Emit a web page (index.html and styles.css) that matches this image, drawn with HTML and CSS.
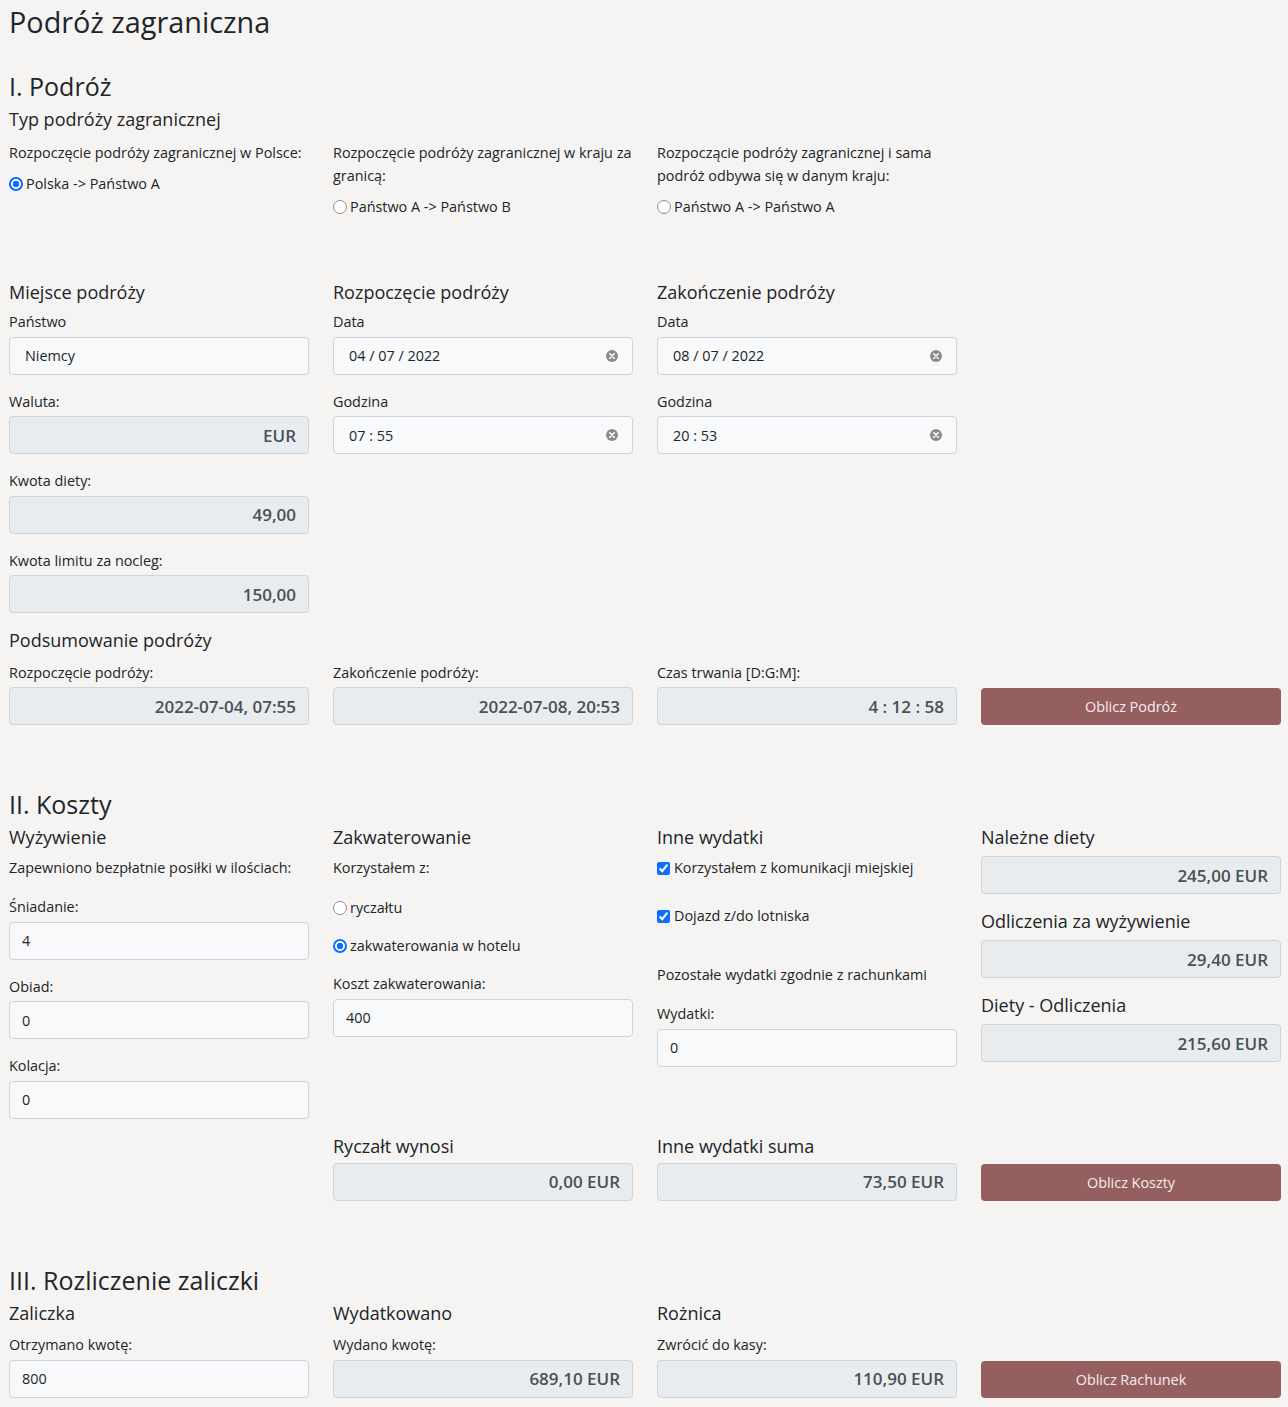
FILE: index.html
```html
<!DOCTYPE html>
<html lang="pl">
<head>
<meta charset="utf-8">
<title>Podróż zagraniczna</title>
<link rel="stylesheet" href="styles.css">
</head>
<body>
<div class="page">
  <h2 class="title">Podróż zagraniczna</h2>

  <!-- I. Podróż -->
  <h4 class="section-title first">I. Podróż</h4>
  <h5 class="sub">Typ podróży zagranicznej</h5>
  <div class="grid type-grid">
    <div class="col">
      <div class="type-label">Rozpoczęcie podróży zagranicznej w Polsce:</div>
      <label class="choice type-choice"><input class="radio" type="radio" name="typ" checked> Polska -&gt; Państwo A</label>
    </div>
    <div class="col">
      <div class="type-label">Rozpoczęcie podróży zagranicznej w kraju za granicą:</div>
      <label class="choice type-choice"><input class="radio" type="radio" name="typ"> Państwo A -&gt; Państwo B</label>
    </div>
    <div class="col">
      <div class="type-label">Rozpoczącie podróży zagranicznej i sama podróż odbywa się w danym kraju:</div>
      <label class="choice type-choice"><input class="radio" type="radio" name="typ"> Państwo A -&gt; Państwo A</label>
    </div>
  </div>

  <div class="grid">
    <div class="col">
      <h5 class="sub">Miejsce podróży</h5>
      <div class="group">
        <span class="label">Państwo</span>
        <div class="input wide-pad">Niemcy</div>
      </div>
      <div class="group">
        <span class="label">Waluta:</span>
        <div class="input readonly">EUR</div>
      </div>
      <div class="group">
        <span class="label">Kwota diety:</span>
        <div class="input readonly">49,00</div>
      </div>
      <div class="group">
        <span class="label">Kwota limitu za nocleg:</span>
        <div class="input readonly">150,00</div>
      </div>
    </div>
    <div class="col">
      <h5 class="sub">Rozpoczęcie podróży</h5>
      <div class="group">
        <span class="label">Data</span>
        <div class="input wide-pad clearable"><span>04 / 07 / 2022</span><svg class="clear" width="12" height="12" viewBox="0 0 12 12"><circle cx="6" cy="6" r="6" fill="#8c8c8c"/><path d="M3.8 3.8L8.2 8.2M8.2 3.8L3.8 8.2" stroke="#fff" stroke-width="1.6" stroke-linecap="round"/></svg></div>
      </div>
      <div class="group">
        <span class="label">Godzina</span>
        <div class="input wide-pad clearable"><span>07 : 55</span><svg class="clear" width="12" height="12" viewBox="0 0 12 12"><circle cx="6" cy="6" r="6" fill="#8c8c8c"/><path d="M3.8 3.8L8.2 8.2M8.2 3.8L3.8 8.2" stroke="#fff" stroke-width="1.6" stroke-linecap="round"/></svg></div>
      </div>
    </div>
    <div class="col">
      <h5 class="sub">Zakończenie podróży</h5>
      <div class="group">
        <span class="label">Data</span>
        <div class="input wide-pad clearable"><span>08 / 07 / 2022</span><svg class="clear" width="12" height="12" viewBox="0 0 12 12"><circle cx="6" cy="6" r="6" fill="#8c8c8c"/><path d="M3.8 3.8L8.2 8.2M8.2 3.8L3.8 8.2" stroke="#fff" stroke-width="1.6" stroke-linecap="round"/></svg></div>
      </div>
      <div class="group">
        <span class="label">Godzina</span>
        <div class="input wide-pad clearable"><span>20 : 53</span><svg class="clear" width="12" height="12" viewBox="0 0 12 12"><circle cx="6" cy="6" r="6" fill="#8c8c8c"/><path d="M3.8 3.8L8.2 8.2M8.2 3.8L3.8 8.2" stroke="#fff" stroke-width="1.6" stroke-linecap="round"/></svg></div>
      </div>
    </div>
    <div class="col"></div>
  </div>

  <h5 class="sub sub-summary">Podsumowanie podróży</h5>
  <div class="grid action-row">
    <div class="col">
      <span class="label">Rozpoczęcie podróży:</span>
      <div class="input readonly">2022-07-04, 07:55</div>
    </div>
    <div class="col">
      <span class="label">Zakończenie podróży:</span>
      <div class="input readonly">2022-07-08, 20:53</div>
    </div>
    <div class="col">
      <span class="label">Czas trwania [D:G:M]:</span>
      <div class="input readonly">4 : 12 : 58</div>
    </div>
    <div class="col col-end">
      <button class="btn" type="button">Oblicz Podróż</button>
    </div>
  </div>

  <!-- II. Koszty -->
  <h4 class="section-title">II. Koszty</h4>
  <div class="grid">
    <div class="col">
      <h5 class="sub">Wyżywienie</h5>
      <p class="text">Zapewniono bezpłatnie posiłki w ilościach:</p>
      <div class="group">
        <span class="label">Śniadanie:</span>
        <div class="input">4</div>
      </div>
      <div class="group">
        <span class="label">Obiad:</span>
        <div class="input">0</div>
      </div>
      <div class="group">
        <span class="label">Kolacja:</span>
        <div class="input">0</div>
      </div>
    </div>
    <div class="col">
      <h5 class="sub">Zakwaterowanie</h5>
      <p class="text">Korzystałem z:</p>
      <label class="choice radio-first"><input class="radio" type="radio" name="nocleg"> ryczałtu</label>
      <label class="choice radio-second"><input class="radio" type="radio" name="nocleg" checked> zakwaterowania w hotelu</label>
      <div class="group">
        <span class="label">Koszt zakwaterowania:</span>
        <div class="input">400</div>
      </div>
    </div>
    <div class="col">
      <h5 class="sub">Inne wydatki</h5>
      <label class="choice check-first"><input class="check" type="checkbox" checked> Korzystałem z komunikacji miejskiej</label>
      <label class="choice check-second"><input class="check" type="checkbox" checked> Dojazd z/do lotniska</label>
      <p class="text">Pozostałe wydatki zgodnie z rachunkami</p>
      <div class="group">
        <span class="label">Wydatki:</span>
        <div class="input">0</div>
      </div>
    </div>
    <div class="col">
      <h5 class="sub">Należne diety</h5>
      <div class="input readonly result">245,00 EUR</div>
      <h5 class="sub">Odliczenia za wyżywienie</h5>
      <div class="input readonly result">29,40 EUR</div>
      <h5 class="sub">Diety - Odliczenia</h5>
      <div class="input readonly result">215,60 EUR</div>
    </div>
  </div>

  <div class="grid action-row">
    <div class="col"></div>
    <div class="col">
      <h5 class="sub sub-sum">Ryczałt wynosi</h5>
      <div class="input readonly">0,00 EUR</div>
    </div>
    <div class="col">
      <h5 class="sub sub-sum">Inne wydatki suma</h5>
      <div class="input readonly">73,50 EUR</div>
    </div>
    <div class="col col-end">
      <button class="btn" type="button">Oblicz Koszty</button>
    </div>
  </div>

  <!-- III. Rozliczenie zaliczki -->
  <h4 class="section-title">III. Rozliczenie zaliczki</h4>
  <div class="grid action-row">
    <div class="col">
      <h5 class="sub sub-tight">Zaliczka</h5>
      <span class="label">Otrzymano kwotę:</span>
      <div class="input">800</div>
    </div>
    <div class="col">
      <h5 class="sub sub-tight">Wydatkowano</h5>
      <span class="label">Wydano kwotę:</span>
      <div class="input readonly">689,10 EUR</div>
    </div>
    <div class="col">
      <h5 class="sub sub-tight">Rożnica</h5>
      <span class="label">Zwrócić do kasy:</span>
      <div class="input readonly">110,90 EUR</div>
    </div>
    <div class="col col-end">
      <button class="btn" type="button">Oblicz Rachunek</button>
    </div>
  </div>
</div>
</body>
</html>
```

FILE: styles.css
```css
html, body {
  margin: 0;
  padding: 0;
}

body {
  background: #f5f4f2;
  font-family: "Open Sans", "Noto Sans", sans-serif;
  color: #212529;
}

.page {
  padding: 5px 0 0 9px;
}

.title {
  font-size: 28.8px;
  line-height: 34px;
  font-weight: 400;
  margin: 0;
}

.section-title {
  font-size: 25px;
  line-height: 29px;
  font-weight: 400;
  margin: 65px 0 7px;
}

.section-title.first {
  margin-top: 33px;
}

.sub {
  font-size: 18px;
  line-height: 22px;
  font-weight: 400;
  margin: 0 0 8px;
}

.sub-summary {
  margin-bottom: 10.5px;
}

.sub-sum {
  margin-bottom: 6px;
}

.sub-tight {
  margin-bottom: 10.5px;
}

.grid {
  display: grid;
  grid-template-columns: repeat(4, 300px);
  column-gap: 24px;
}

.col {
  display: flex;
  flex-direction: column;
  min-width: 0;
}

.col-end {
  justify-content: flex-end;
}

.type-grid {
  margin-bottom: 63px;
}

.type-label {
  font-size: 14.4px;
  line-height: 23px;
  padding-top: 3px;
}

.choice {
  display: flex;
  align-items: center;
  font-size: 14.4px;
  height: 24px;
  line-height: 24px;
}

.type-choice {
  margin-top: 8px;
  height: 23px;
  line-height: 23px;
}

.radio {
  appearance: none;
  -webkit-appearance: none;
  box-sizing: border-box;
  width: 14px;
  height: 14px;
  margin: 0 3px 0 0;
  border: 1.5px solid #8f8f9d;
  border-radius: 50%;
  background: #ffffff;
  flex: none;
}

.radio:checked {
  border: 2px solid #0d6efd;
  background: radial-gradient(circle, #0d6efd 0 3px, #ffffff 3.6px);
}

.check {
  width: 13px;
  height: 13px;
  margin: 0 4px 0 0;
  accent-color: #0d6efd;
  flex: none;
}

.radio-first {
  margin-bottom: 14px;
}

.radio-second {
  margin-bottom: 15px;
}

.check-first {
  margin-bottom: 24px;
}

.check-second {
  margin-bottom: 35px;
}

.text {
  font-size: 14.4px;
  line-height: 24px;
  margin: 0 0 16px;
}

.group {
  margin-bottom: 16px;
}

.label {
  display: block;
  font-size: 14.4px;
  line-height: 21px;
  margin-bottom: 4.5px;
}

.input {
  box-sizing: border-box;
  height: 38px;
  border: 1px solid #ced4da;
  border-radius: 4px;
  background: #f8f9fa;
  font-size: 14.4px;
  color: #212529;
  padding: 0 12px;
  display: flex;
  align-items: center;
}

.wide-pad {
  padding-left: 15px;
}

.clearable {
  justify-content: space-between;
  padding-right: 14px;
}

.clear {
  display: block;
}

.readonly {
  background: #e9ecef;
  justify-content: flex-end;
  font-size: 17px;
  font-weight: 600;
  color: #495057;
}

.result {
  margin-bottom: 16px;
}

.btn {
  box-sizing: border-box;
  width: 100%;
  height: 37px;
  border: 0;
  border-radius: 4px;
  background: #955f60;
  color: #f4ecec;
  font-family: inherit;
  font-size: 14.4px;
  padding: 0;
}
```
